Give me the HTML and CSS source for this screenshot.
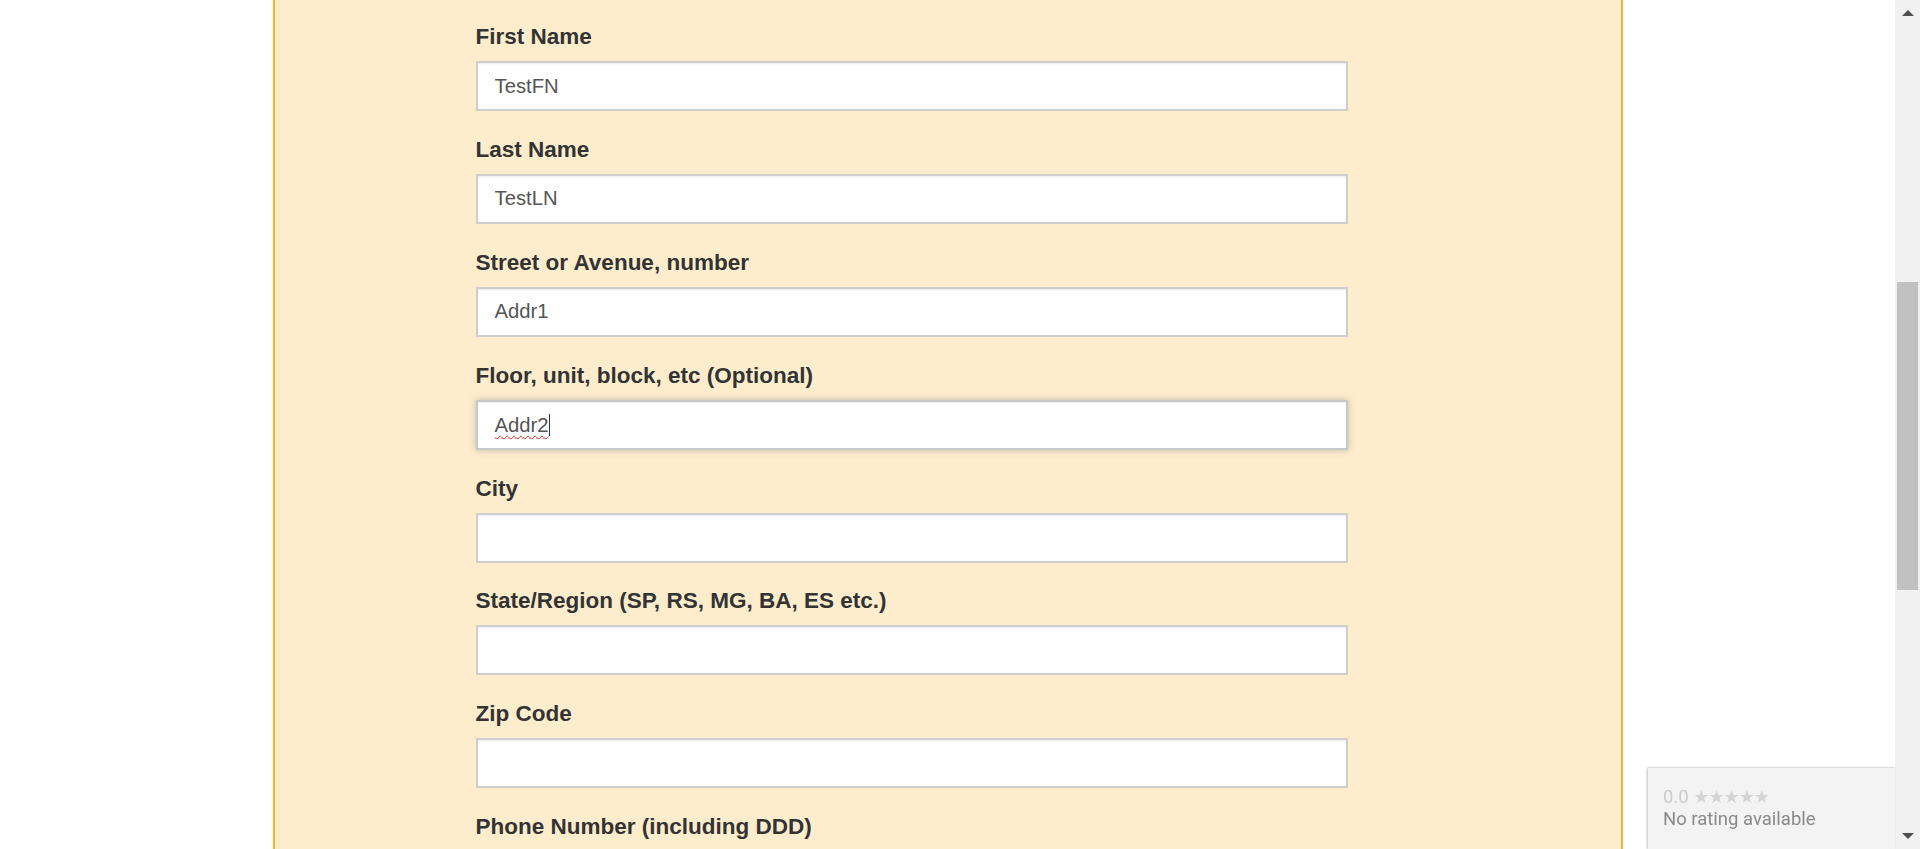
FILE: index.html
```html
<!DOCTYPE html>
<html lang="en">
<head>
<meta charset="utf-8">
<title>Address form</title>
<link rel="stylesheet" href="styles.css">
</head>
<body>
<div class="page">
  <main class="content">
    <form class="panel">
      <div class="group">
        <label class="label" for="fn">First Name</label>
        <input class="field" id="fn" type="text" value="TestFN">
      </div>
      <div class="group">
        <label class="label" for="ln">Last Name</label>
        <input class="field" id="ln" type="text" value="TestLN">
      </div>
      <div class="group">
        <label class="label" for="a1">Street or Avenue, number</label>
        <input class="field" id="a1" type="text" value="Addr1">
      </div>
      <div class="group">
        <label class="label">Floor, unit, block, etc (Optional)</label>
        <div class="field field-focus" role="textbox"><span class="misspelt">Addr2</span><span class="caret"></span></div>
      </div>
      <div class="group">
        <label class="label" for="city">City</label>
        <input class="field" id="city" type="text" value="">
      </div>
      <div class="group">
        <label class="label" for="st">State/Region (SP, RS, MG, BA, ES etc.)</label>
        <input class="field" id="st" type="text" value="">
      </div>
      <div class="group">
        <label class="label" for="zip">Zip Code</label>
        <input class="field" id="zip" type="text" value="">
      </div>
      <div class="group">
        <label class="label" for="ph">Phone Number (including DDD)</label>
        <input class="field" id="ph" type="text" value="">
      </div>
    </form>
  </main>
  <div class="scrollbar">
    <div class="arrow arrow-up"></div>
    <div class="track"><div class="thumb"></div></div>
    <div class="arrow arrow-down"></div>
  </div>
</div>
<div class="rating">
  <div class="rating-score">0.0 <span class="stars">★★★★★</span></div>
  <div class="rating-text">No rating available</div>
</div>
</body>
</html>
```
FILE: styles.css
```css
html, body {
  margin: 0;
  padding: 0;
  height: 100%;
  overflow: hidden;
  background: #ffffff;
}

.page {
  display: flex;
  height: 100vh;
}

.content {
  flex: 1;
  min-width: 0;
  display: flex;
  justify-content: center;
}

.panel {
  box-sizing: border-box;
  width: 1350px;
  height: 100%;
  margin: 0;
  background: #feedcc;
  border-left: 2px solid #f8b22d;
  border-right: 2px solid #f8b22d;
  padding: 21px 0 0 201px;
  display: flex;
  flex-direction: column;
  font-family: "Liberation Sans", Arial, sans-serif;
}

.group {
  display: flex;
  flex-direction: column;
  margin-bottom: 22.9px;
  flex-shrink: 0;
}

.label {
  display: block;
  font-size: 22.5px;
  line-height: 31px;
  font-weight: bold;
  color: #333333;
  margin-bottom: 9px;
}

.field {
  box-sizing: border-box;
  width: 872px;
  height: 50px;
  margin: 0;
  padding: 0 17px;
  border: 2px solid #cecece;
  border-radius: 0;
  background: #ffffff;
  box-shadow: inset 0 1px 2px rgba(0, 0, 0, 0.08);
  font-family: "Liberation Sans", Arial, sans-serif;
  font-size: 20.3px;
  line-height: 46px;
  color: #555555;
  outline: none;
}

.field-focus {
  display: flex;
  align-items: center;
  border-color: #c6c8c9;
  box-shadow: inset 0 1px 2px rgba(0, 0, 0, 0.08), 0 0 7px rgba(102, 120, 130, 0.45);
}

.misspelt {
  text-decoration: underline wavy #e8231f;
  text-decoration-thickness: 1px;
  text-underline-offset: 3px;
  line-height: 24px;
}

.caret {
  display: inline-block;
  width: 1px;
  height: 22px;
  background: #333333;
  align-self: center;
}

.scrollbar {
  width: 25px;
  flex-shrink: 0;
  background: #f1f1f1;
  display: flex;
  flex-direction: column;
  align-items: center;
}

.arrow {
  width: 0;
  height: 0;
  border-left: 6px solid transparent;
  border-right: 6px solid transparent;
  flex-shrink: 0;
}

.arrow-up {
  margin-top: 10px;
  border-bottom: 6px solid #505050;
}

.arrow-down {
  margin-bottom: 10px;
  border-top: 6px solid #505050;
}

.track {
  flex: 1;
  width: 100%;
  display: flex;
  justify-content: center;
}

.thumb {
  width: 21px;
  height: 308px;
  margin-top: 266px;
  background: #c1c1c1;
}

.rating {
  position: fixed;
  left: 1648px;
  top: 768px;
  width: 247px;
  height: 81px;
  box-sizing: border-box;
  padding: 18px 0 0 15px;
  background: #f3f3f3;
  box-shadow: -1px 0 2px rgba(0, 0, 0, 0.25), 0 -1px 1px rgba(0, 0, 0, 0.06);
  font-family: Roboto, "Liberation Sans", sans-serif;
  font-size: 18.5px;
  line-height: 22px;
}

.rating-score {
  color: #cccccc;
}

.stars {
  color: #d4d4d4;
  font-family: "DejaVu Sans", sans-serif;
  font-size: 18px;
  letter-spacing: -1px;
}

.rating-text {
  color: #8a8a8a;
}
```
